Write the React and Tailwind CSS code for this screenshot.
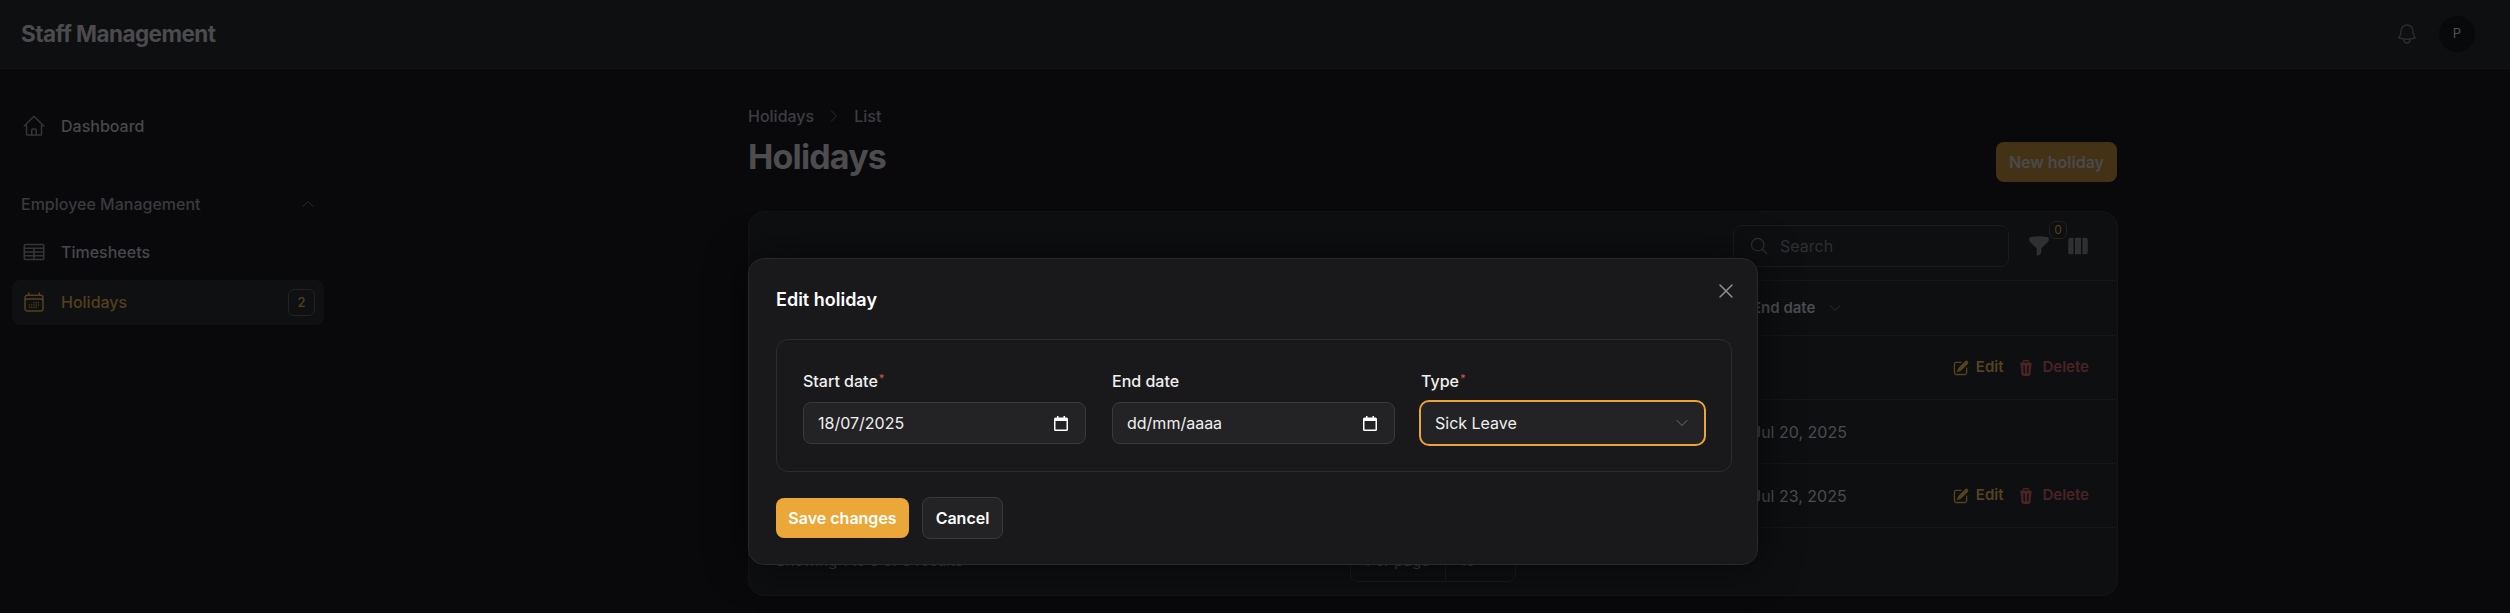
import React from 'react';
import {
    HiOutlineHome,
    HiOutlineTableCells,
    HiOutlineCalendarDays,
    HiOutlineBell,
    HiOutlineChevronUp,
    HiOutlineChevronDown,
    HiOutlineChevronRight,
    HiOutlineMagnifyingGlass,
    HiOutlineXMark,
} from 'react-icons/hi2';
import { HiFunnel, HiViewColumns, HiMiniPencilSquare, HiMiniTrash } from 'react-icons/hi2';

const Topbar = () => (
    <header className="flex h-[69px] shrink-0 items-center justify-between border-b border-[#131416] bg-[#0e0f11] pl-[21px] pr-[35px]">
        <span className="text-[22.5px] font-bold tracking-tight text-[#4b4b4d]">Staff Management</span>
        <div className="flex items-center gap-[20px]">
            <HiOutlineBell className="text-[#2c2c2e]" size={24} />
            <div className="flex h-9 w-9 items-center justify-center rounded-full bg-[#08090a] text-[13px] text-[#505052]">P</div>
        </div>
    </header>
);

const Sidebar = () => (
    <aside className="w-[336px] shrink-0 px-[12px] pt-[37px]">
        <div className="flex h-10 items-center gap-[15px] px-[10px] text-[16px] font-medium text-[#47484c]">
            <HiOutlineHome className="text-[#343538]" size={24} />
            Dashboard
        </div>
        <div className="mt-[46px] flex h-6 items-center justify-between pl-[9px] pr-[8px] text-[16px] font-medium text-[#393a3e]">
            Employee Management
            <HiOutlineChevronUp className="text-[#2e2f32]" size={16} />
        </div>
        <div className="mt-[13px] flex h-[45px] items-center gap-[15px] px-[10px] text-[16px] font-medium text-[#47484c]">
            <HiOutlineTableCells className="text-[#343538]" size={24} />
            Timesheets
        </div>
        <div className="mt-[6px] flex h-[45px] items-center justify-between rounded-lg bg-[#0f1011] pl-[10px] pr-[9px]">
            <div className="flex items-center gap-[15px] pb-[1px] text-[16px] font-medium text-[#54401c]">
                <HiOutlineCalendarDays size={24} />
                Holidays
            </div>
            <div className="flex h-[27px] w-[27px] items-center justify-center rounded-md border border-[#26211a] text-[13px] font-medium text-[#54401f]">2</div>
        </div>
    </aside>
);

const TableRow = ({ date, actions }) => (
    <div className="flex h-[64px] items-center justify-end border-t border-[#151618] pr-[28px]">
        <div className="flex w-[337px] items-center justify-between text-[16px] text-[#4b4c4f]">
            <span>{date}</span>
            {actions && (
                <div className="flex items-center gap-[14px] text-[15px] font-semibold">
                    <span className="flex items-center gap-[6px] text-[#54431f]">
                        <HiMiniPencilSquare size={18} />
                        Edit
                    </span>
                    <span className="flex items-center gap-[7px] text-[#4a2424]">
                        <HiMiniTrash size={18} />
                        Delete
                    </span>
                </div>
            )}
        </div>
    </div>
);

const HolidaysCard = () => (
    <div className="mt-[29px] h-[385px] overflow-hidden rounded-2xl border border-[#131416] bg-[#0e0f11]">
        <div className="flex h-[68px] items-center justify-end gap-[18px] pr-[27px]">
            <div className="flex h-[42px] w-[276px] items-center gap-[11px] rounded-lg border border-[#1a1b1d] px-[15px] text-[16px] text-[#2f3033]">
                <HiOutlineMagnifyingGlass size={20} />
                Search
            </div>
            <div className="relative flex items-center gap-[15px] text-[#2f3033]">
                <HiFunnel size={24} />
                <span className="absolute -top-[13px] left-[22px] flex h-[18px] w-[18px] items-center justify-center rounded-md border border-[#26211a] bg-[#0e0f11] text-[12px] text-[#54401f]">0</span>
                <HiViewColumns size={24} />
            </div>
        </div>
        <div className="flex h-[55px] items-center justify-end border-t border-[#151618] pr-[28px]">
            <div className="flex w-[337px] items-center gap-[12px] text-[15px] font-semibold text-[#4b4c4f]">
                End date
                <HiOutlineChevronDown className="text-[#2f3033]" size={16} />
            </div>
        </div>
        <TableRow date="" actions />
        <TableRow date="Jul 20, 2025" />
        <TableRow date="Jul 23, 2025" actions />
        <div className="grid h-[69px] grid-cols-3 items-center border-t border-[#151618] px-[27px] pb-[2px]">
            <span className="text-[15px] text-[#3c3d40]">Showing 1 to 3 of 3 results</span>
            <div className="flex justify-center">
                <div className="flex h-[42px] w-[166px] items-center rounded-lg border border-[#1a1b1d] text-[15px] text-[#3c3d40]">
                    <span className="flex h-full w-[95px] items-center justify-center border-r border-[#1a1b1d]">Per page</span>
                    <span className="pl-[14px]">10</span>
                </div>
            </div>
        </div>
    </div>
);

const Main = () => (
    <main className="w-[1782px] pl-[412px] pt-[35px]">
        <div className="w-[1370px]">
            <div className="flex items-center gap-[12px] text-[16px] font-medium text-[#3c3d40]">
                Holidays
                <HiOutlineChevronRight className="text-[#2f3033]" size={16} />
                List
            </div>
            <div className="mt-[9px] flex items-start justify-between">
                <h1 className="text-[34px] leading-[40px] font-bold tracking-tight text-[#4d4d4f]">Holidays</h1>
                <button className="mt-[5px] mr-[1px] flex h-10 w-[121px] items-center justify-center rounded-lg bg-[#443216] text-[16px] font-semibold text-[#4a4a4c]">New holiday</button>
            </div>
            <HolidaysCard />
        </div>
    </main>
);

const CalendarGlyph = () => (
    <svg width="14" height="15" viewBox="0 0 14 15" className="text-white">
        <path fill="currentColor" d="M3 0h1.5v1.5h5V0H11v1.5h1.5A1.5 1.5 0 0 1 14 3v10.5a1.5 1.5 0 0 1-1.5 1.5h-11A1.5 1.5 0 0 1 0 13.5V3a1.5 1.5 0 0 1 1.5-1.5H3V0zM1.5 5v8.5h11V5h-11z" />
    </svg>
);

const Label = ({ children, required }) => (
    <label className="flex h-[22px] items-center text-[16px] leading-[22px] font-medium text-[#f0f0f0]">
        {children}
        {required && <sup className="relative -top-[3px] ml-[1px] text-[11px] font-medium text-[#c25450]">*</sup>}
    </label>
);

const DateField = ({ label, value, required }) => (
    <div className="flex flex-col gap-[10px]">
        <Label required={required}>{label}</Label>
        <div className="flex h-[42px] items-center justify-between rounded-lg border border-[#3a3a3c] bg-[#232325] pl-[14px] pr-[17px] text-[16px] text-[#f0f0f0]">
            {value}
            <CalendarGlyph />
        </div>
    </div>
);

const EditModal = () => (
    <div className="absolute left-[748px] top-[258px] h-[307px] w-[1010px] rounded-2xl border border-[#29292b] bg-[#19191b] px-[27px] pt-[27px] shadow-[0_0_40px_rgba(0,0,0,0.6)]">
        <div className="flex items-start justify-between">
            <h2 className="text-[18px] leading-[28px] font-semibold text-white">Edit holiday</h2>
            <HiOutlineXMark className="-mt-[7px] -mr-[8px] text-[#8f8f91]" size={24} />
        </div>
        <div className="mt-[25px] h-[133px] w-[956px] rounded-xl border border-[#2d2d2f] pl-[26px] pr-[27px] pt-[30px]">
            <div className="grid grid-cols-3 gap-[26px]">
                <DateField label="Start date" value="18/07/2025" required />
                <DateField label="End date" value="dd/mm/aaaa" />
                <div className="flex flex-col gap-[10px]">
                    <Label required>Type</Label>
                    <div className="flex h-[42px] items-center justify-between rounded-lg bg-[#232325] pl-[14px] pr-[14px] text-[16px] text-[#f0f0f0] outline-2 outline-[#eba535]">
                        Sick Leave
                        <HiOutlineChevronDown className="text-[#6e6e72]" size={16} />
                    </div>
                </div>
            </div>
        </div>
        <div className="mt-[25px] flex items-center gap-[13px]">
            <button className="flex h-10 w-[133px] items-center justify-center rounded-lg bg-[#eba737] text-[16px] font-semibold text-white">Save changes</button>
            <button className="flex h-[42px] w-[81px] items-center justify-center rounded-lg border border-[#3a3a3c] bg-[#232325] text-[16px] font-semibold text-white">Cancel</button>
        </div>
    </div>
);

export default function App() {
    return (
        <div className="relative flex h-[613px] flex-col overflow-hidden bg-[#09090b] font-['Inter',sans-serif]">
            <Topbar />
            <div className="flex flex-1">
                <Sidebar />
                <Main />
            </div>
            <EditModal />
        </div>
    );
}
